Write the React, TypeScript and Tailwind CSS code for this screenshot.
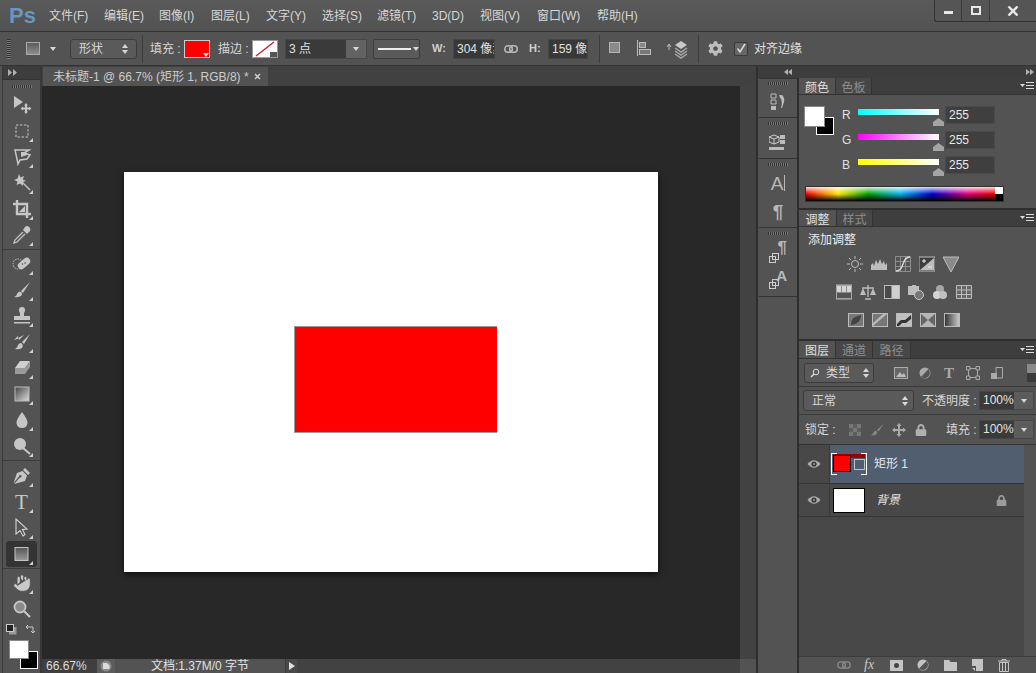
import { Hand } from 'lucide-react';
import { FaCog, FaLock } from 'react-icons/fa';
import type { ReactNode } from 'react';

const Flyout = () => (
  <span className="absolute right-[7px] bottom-[2px] w-0 h-0 border-l-[4px] border-l-transparent border-b-[4px] border-b-[#d0d0d0]" />
);

const Ico = ({ children, size = 20, className = '' }: { children: ReactNode; size?: number; className?: string }) => (
  <svg width={size} height={size} viewBox="0 0 20 20" className={className}>
    {children}
  </svg>
);

const G = '#c6c6c6';

const toolGroups: { icon: ReactNode; fly?: boolean; active?: boolean }[][] = [
  [
    {
      icon: (
        <Ico>
          <path d="M2 1 L2 13 L11 7Z" fill={G} />
          <path d="M14 8 L16 10.500 L15 10.500 L15 12.500 L17 12.500 L17 11.500 L19.500 13.500 L17 15.500 L17 14.500 L15 14.500 L15 16.500 L16 16.500 L14 19 L12 16.500 L13 16.500 L13 14.500 L11 14.500 L11 15.500 L8.500 13.500 L11 11.500 L11 12.500 L13 12.500 L13 10.500 L12 10.500Z" fill={G} />
        </Ico>
      ),
    },
    {
      fly: true,
      icon: (
        <Ico>
          <rect x="4" y="4" width="12" height="12" fill="none" stroke={G} strokeWidth="1" strokeDasharray="2.500 1.500" />
        </Ico>
      ),
    },
    {
      fly: true,
      icon: (
        <Ico>
          <path d="M3 3 L17 3 L12 6 L18 8 L15 12 L8 13 L6 17 L5 12Z" fill="none" stroke={G} strokeWidth="1.500" />
          <path d="M9 5 L14 5 L15 8 L9 10Z" fill={G} />
        </Ico>
      ),
    },
    {
      fly: true,
      icon: (
        <Ico>
          <path d="M7 1 L8.500 4.500 L12 3 L10.800 6.500 L14 8 L10.500 9 L11 13 L8 10.500 L4.500 12 L5.500 8.500 L2 7 L5.500 5.500Z" fill={G} />
          <path d="M10 9 L18 17" stroke={G} strokeWidth="1.500" />
        </Ico>
      ),
    },
    {
      fly: true,
      icon: (
        <Ico>
          <path d="M5 1 V15 H19 M1 5 H15 V19" fill="none" stroke={G} strokeWidth="2.400" />
          <path d="M7 13 L13 7 V13Z" fill={G} />
        </Ico>
      ),
    },
    {
      fly: true,
      icon: (
        <Ico>
          <path d="M13 2 Q15 0 17.500 2.500 Q19.500 5 17 7 L15 9 L11 5Z" fill={G} />
          <path d="M11 7 L3 15 L2 18 L5 17 L13 9" fill="none" stroke={G} strokeWidth="1.300" />
        </Ico>
      ),
    },
  ],
  [
    {
      fly: true,
      icon: (
        <Ico>
          <circle cx="6" cy="10" r="5" fill="none" stroke={G} strokeWidth="1" strokeDasharray="1.500 1" />
          <rect x="5" y="6" width="14" height="7" rx="3.500" transform="rotate(-40 12 9.500)" fill={G} />
          <circle cx="10.500" cy="10" r="0.800" fill="#555" />
          <circle cx="13" cy="9" r="0.800" fill="#555" />
        </Ico>
      ),
    },
    {
      fly: true,
      icon: (
        <Ico>
          <path d="M18 2 L9 11 L11 13Z" fill={G} />
          <path d="M8 11.500 Q11 13 9.500 15.500 Q7 18 2 17 Q5 16 5 14 Q5.500 12 8 11.500Z" fill={G} />
        </Ico>
      ),
    },
    {
      fly: true,
      icon: (
        <Ico>
          <path d="M10 1 Q13 1 13 4 Q13 6 12 7 L12 10 H18 V14 H2 V10 H8 V7 Q7 6 7 4 Q7 1 10 1Z" fill={G} />
          <rect x="2" y="16" width="16" height="1.500" fill={G} />
        </Ico>
      ),
    },
    {
      fly: true,
      icon: (
        <Ico>
          <path d="M18 2 L10 10 L12 12Z" fill={G} />
          <path d="M9 11 Q12 13 10 16 Q7 18 3 17 Q6 15 6 13 Q7 11 9 11Z" fill={G} />
          <path d="M2 8 L6 4 V6 L12 3 L7 8 V6.500Z" fill={G} />
        </Ico>
      ),
    },
    {
      fly: true,
      icon: (
        <Ico>
          <path d="M8 3 H18 L13 10 H3Z" fill="#d0d0d0" />
          <path d="M3 10 H13 V16 H3Z M13 10 L18 3 V9 L13 16Z" fill="#9a9a9a" />
        </Ico>
      ),
    },
    {
      fly: true,
      icon: (
        <Ico>
          <defs>
            <linearGradient id="gr" x1="0" x2="1" y1="0" y2="1">
              <stop offset="0" stopColor="#444" />
              <stop offset="1" stopColor="#ddd" />
            </linearGradient>
          </defs>
          <rect x="3" y="3" width="14" height="14" fill="url(#gr)" stroke="#bbb" />
        </Ico>
      ),
    },
    {
      fly: true,
      icon: (
        <Ico>
          <path d="M10 2 Q16 10 15.500 13 Q15 18 10 18 Q5 18 4.500 13 Q4 10 10 2Z" fill={G} />
        </Ico>
      ),
    },
    {
      fly: true,
      icon: (
        <Ico>
          <circle cx="8" cy="8" r="6" fill={G} />
          <path d="M11 12 L18 18" stroke={G} strokeWidth="2" />
        </Ico>
      ),
    },
  ],
  [
    {
      fly: true,
      icon: (
        <Ico>
          <path d="M13 2 L18 7 L16 9 L11 4Z" fill={G} />
          <path d="M10.500 5 L15 9.500 L13 15 L2 18 L8 11.500 A1.300 1.300 0 1 0 7 10.500 L1.500 17 L5 7Z" fill={G} />
        </Ico>
      ),
    },
    {
      fly: true,
      icon: <span className="font-['Liberation_Serif',serif] text-[21px] leading-none text-[#c6c6c6]">T</span>,
    },
    {
      fly: true,
      icon: (
        <Ico>
          <path d="M4 1 L4 16 L8 12.500 L11 18 L13 16.500 L10.500 11.500 L15 11Z" fill="#555" stroke="#d4d4d4" strokeWidth="1.100" />
        </Ico>
      ),
    },
    {
      fly: true,
      active: true,
      icon: (
        <Ico>
          <defs>
            <linearGradient id="rc" x1="0" x2="0" y1="0" y2="1">
              <stop offset="0" stopColor="#555" />
              <stop offset="1" stopColor="#999" />
            </linearGradient>
          </defs>
          <rect x="3" y="3.500" width="13" height="13" fill="url(#rc)" stroke="#c4c4c4" />
        </Ico>
      ),
    },
  ],
  [
    {
      fly: true,
      icon: <Hand size={20} fill="#cacaca" stroke="#535353" strokeWidth={1.200} />,
    },
    {
      icon: (
        <Ico>
          <circle cx="8" cy="8" r="5.500" fill="#8a8a8a" stroke="#c6c6c6" strokeWidth="1.800" />
          <path d="M12 12 L18 18" stroke={G} strokeWidth="2.200" />
        </Ico>
      ),
    },
  ],
];

const groupGaps = ['', 'border-t border-[#3c3c3c] pt-[1px] mt-[1px]', 'border-t border-[#3c3c3c] pt-[2px] mt-[1px]', 'border-t border-[#3c3c3c] pt-[1px] mt-[1px]'];

const menus: [string, string][] = [
  ['文件(F)', 'w-[55px]'],
  ['编辑(E)', 'w-[55px]'],
  ['图像(I)', 'w-[52px]'],
  ['图层(L)', 'w-[55px]'],
  ['文字(Y)', 'w-[56px]'],
  ['选择(S)', 'w-[55px]'],
  ['滤镜(T)', 'w-[55px]'],
  ['3D(D)', 'w-[48px]'],
  ['视图(V)', 'w-[57px]'],
  ['窗口(W)', 'w-[60px]'],
  ['帮助(H)', 'w-[50px]'],
];

const Grip = ({ className = '' }: { className?: string }) => (
  <div className={`h-[3px] w-[20px] mx-auto bg-[repeating-linear-gradient(to_right,#2f2f2f_0,#2f2f2f_1px,#7a7a7a_1px,#7a7a7a_2px)] ${className}`} />
);

const Caret = ({ className = '' }: { className?: string }) => (
  <span className={`w-0 h-0 border-x-[3px] border-x-transparent border-t-[4px] border-t-[#d8d8d8] ${className}`} />
);

const UpDown = () => (
  <span className="flex flex-col gap-[2px]">
    <span className="w-0 h-0 border-x-[3px] border-x-transparent border-b-[4px] border-b-[#d8d8d8]" />
    <span className="w-0 h-0 border-x-[3px] border-x-transparent border-t-[4px] border-t-[#d8d8d8]" />
  </span>
);

const OptionSep = ({ className = '' }: { className?: string }) => <div className={`w-[1px] h-[28px] bg-[#3c3c3c] ${className}`} />;

const PanelMenu = () => (
  <svg width="14" height="8" viewBox="0 0 14 8" className="mr-[2px]">
    <path d="M0 2 H5 L2.500 5Z" fill="#ddd" />
    <path d="M6 0.500 H14 M6 3.500 H14 M6 6.500 H14" stroke="#ddd" strokeWidth="1" />
  </svg>
);

const PanelTabs = ({ tabs, height }: { tabs: [string, string][]; height: string }) => (
  <div className={`flex items-stretch justify-between bg-[#3e3e3e] border-b border-[#333] ${height}`}>
    <div className="flex">
      {tabs.map(([label, width], i) => (
        <div
          key={label}
          className={`${width} flex items-center justify-center pt-[3px] text-[12px] border-r border-[#333] ${i === 0 ? 'bg-[#535353] text-[#e0e0e0]' : 'bg-[#474747] text-[#8e8e8e]'}`}
        >
          {label}
        </div>
      ))}
    </div>
    <div className="flex items-center">
      <PanelMenu />
    </div>
  </div>
);

const ColorRow = ({ label, slider }: { label: string; slider: string }) => (
  <div className="flex items-center h-[18px] mb-[7px]">
    <span className="w-[16px] text-[12px] text-[#e0e0e0]">{label}</span>
    <div className={`relative w-[81px] h-[6px] -mt-[6px] ${slider}`}>
      <span className="absolute -right-[5px] top-[9px] w-[11px] h-[8px] bg-[#a4a4a4] [clip-path:polygon(50%_0,100%_50%,100%_100%,0_100%,0_50%)]" />
    </div>
    <div className="ml-[6px] w-[50px] h-[18px] bg-[#3f3f3f] border border-[#4a4a4a] text-[12px] text-[#e8e8e8] pl-[3px] leading-[17px]">255</div>
  </div>
);

const AdjBox = ({ children }: { children: ReactNode }) => (
  <svg width="16" height="16" viewBox="0 0 16 16">
    {children}
  </svg>
);

const A = '#bdbdbd';

const adjRows: { ml: string; icons: ReactNode[] }[] = [
  {
    ml: 'ml-[48px]',
    icons: [
      <>
        <circle cx="8" cy="8" r="3.500" fill="none" stroke={A} />
        <path d="M8 0 V3 M8 13 V16 M0 8 H3 M13 8 H16 M2 2 L4 4 M12 12 L14 14 M14 2 L12 4 M4 12 L2 14" stroke={A} />
      </>,
      <path d="M0 14 V9 L2 7 L3 10 L5 4 L7 8 L9 3 L11 8 L13 5 L14 9 L16 7 V14Z" fill={A} />,
      <>
        <path d="M0.500 0.500 H15.500 V15.500 H0.500Z M5.500 0 V16 M10.500 0 V16 M0 5.500 H16 M0 10.500 H16" fill="none" stroke="#8e8e8e" />
        <path d="M1 15 Q6 15 8 8 Q10 1 15 1" fill="none" stroke="#ddd" strokeWidth="1.300" />
      </>,
      <>
        <rect x="0" y="1" width="16" height="14" fill="#3e3e3e" stroke="#bbb" />
        <path d="M1 14 L15 2 V14Z" fill="#bdbdbd" />
        <path d="M3 5 H7 M5 3 V7 M9 11 H13" stroke="#eee" />
      </>,
      <path d="M0 1 H16 L8 16Z" fill="#8a8a8a" stroke="#bdbdbd" />,
    ],
  },
  {
    ml: 'ml-[37px]',
    icons: [
      <>
        <rect x="0" y="1" width="16" height="14" fill="#8a8a8a" stroke="#bbb" />
        <path d="M1 2 H5 V8 H1Z M6 2 H10 V8 H6Z M11 2 H15 V8 H11Z" fill="#d6d6d6" />
        <rect x="1" y="9" width="14" height="5" fill="#555" />
      </>,
      <>
        <path d="M8 1 V13 M2 4 H14 M5 15 H11" stroke={A} strokeWidth="1.300" />
        <path d="M0 11 L3 4 L6 11Z M10 11 L13 4 L16 11Z" fill={A} />
      </>,
      <>
        <rect x="0.500" y="1.500" width="15" height="13" fill="#d0d0d0" stroke="#bbb" />
        <rect x="1" y="2" width="6.500" height="12" fill="#4a4a4a" />
      </>,
      <>
        <rect x="0" y="2" width="11" height="9" fill="#bdbdbd" />
        <rect x="4" y="1" width="4" height="2" fill="#bdbdbd" />
        <circle cx="11" cy="11" r="4.500" fill="#777" stroke="#c8c8c8" />
      </>,
      <>
        <circle cx="8" cy="5" r="4" fill="#a6a6a6" />
        <circle cx="5" cy="11" r="4" fill="#d4d4d4" />
        <circle cx="11" cy="11" r="4" fill="#c0c0c0" />
      </>,
      <path d="M0.500 1.500 H15.500 V14.500 H0.500Z M5.500 1.500 V14.500 M10.500 1.500 V14.500 M0.500 6 H15.500 M0.500 10.500 H15.500" fill="#666" stroke="#bbb" />,
    ],
  },
  {
    ml: 'ml-[49px]',
    icons: [
      <>
        <rect x="0.500" y="1.500" width="15" height="13" fill="#777" stroke="#bbb" />
        <path d="M3 13 Q3 7 7 5 L13 3 Q13 8 9 11 Q6 13 3 13Z" fill="#444" />
      </>,
      <>
        <rect x="0.500" y="1.500" width="15" height="13" fill="#777" stroke="#bbb" />
        <path d="M1 11 L11 2 H15 L1 14Z" fill="#b8b8b8" />
      </>,
      <>
        <rect x="0.500" y="1.500" width="15" height="13" fill="#c0c0c0" stroke="#bbb" />
        <path d="M1 12 L5 8 H9 L15 3 V7 L10 11 H6 L3 14 H1Z" fill="#333" />
      </>,
      <>
        <rect x="0.500" y="1.500" width="15" height="13" fill="#b4b4b4" stroke="#bbb" />
        <path d="M1 2 L8 8 L1 14Z M15 2 L8 8 L15 14Z" fill="#666" />
      </>,
      <>
        <defs>
          <linearGradient id="gm" x1="0" x2="1" y1="0" y2="0">
            <stop offset="0" stopColor="#333" />
            <stop offset="1" stopColor="#ccc" />
          </linearGradient>
        </defs>
        <rect x="0.500" y="1.500" width="15" height="13" fill="url(#gm)" stroke="#bbb" />
      </>,
    ],
  },
];

const Eye = () => (
  <svg width="14" height="10" viewBox="0 0 14 10">
    <path d="M0.500 5 Q7 -2.500 13.500 5 Q7 12.500 0.500 5Z" fill="#aaa" />
    <circle cx="7" cy="5" r="2.600" fill="#3a3a3a" />
    <circle cx="7" cy="5" r="1" fill="#999" />
  </svg>
);

const SmallIcon = ({ children, w = 14 }: { children: ReactNode; w?: number }) => (
  <svg width={w} height="14" viewBox="0 0 14 14">
    {children}
  </svg>
);

const DarkInput = ({ value }: { value: string }) => (
  <div className="flex h-[19px] w-[55px] bg-[#3a3a3a] border border-[#464646]">
    <span className="flex-1 text-[12px] leading-[17px] pl-[3px] text-[#e4e4e4]">{value}</span>
    <span className="w-[19px] bg-[#5c5c5c] flex items-center justify-center">
      <Caret />
    </span>
  </div>
);

export default function App() {
  return (
    <div className="w-[1036px] h-[673px] overflow-hidden flex flex-col bg-[#535353] text-[#d6d6d6] text-[12px] whitespace-nowrap font-['Liberation_Sans','Noto_Sans_CJK_SC',sans-serif]">
      {/* menu bar */}
      <div className="relative h-[32px] shrink-0 flex items-center border-b border-[#333] bg-[linear-gradient(to_bottom,#5a5a5a,#525252)]">
        <span className="ml-[9px] w-[40px] text-[22px] leading-none font-bold text-[#6b95bf]">Ps</span>
        {menus.map(([label, w]) => (
          <span key={label} className={`${w} text-[12px]`}>
            {label}
          </span>
        ))}
        <div className="absolute right-0 top-0 h-[22px] w-[102px] flex border-l border-b border-[#333] rounded-bl-[3px] bg-[#555]">
          <div className="w-[27px] border-r border-[#3a3a3a] flex items-center justify-center">
            <span className="w-[9px] h-[3px] mt-[3px] bg-[#e8e8e8]" />
          </div>
          <div className="w-[28px] border-r border-[#3a3a3a] flex items-center justify-center">
            <span className="w-[10px] h-[9px] border-2 border-[#e8e8e8]" />
          </div>
          <div className="flex-1 flex items-center justify-center">
            <svg width="12" height="10" viewBox="0 0 12 10">
              <path d="M1.500 0.500 L10.500 9.500 M10.500 0.500 L1.500 9.500" stroke="#e8e8e8" strokeWidth="2.400" />
            </svg>
          </div>
        </div>
      </div>

      {/* options bar */}
      <div className="h-[34px] shrink-0 flex items-center border-b border-[#333] text-[12px]">
        <div className="ml-[7px] w-[4px] h-[20px] bg-[repeating-linear-gradient(to_bottom,#333_0,#333_1px,#777_1px,#777_2px)]" />
        <span className="ml-[15px] w-[14px] h-[13px] bg-[linear-gradient(to_bottom,#5c5c5c,#8e8e8e)] border border-[#aaa]" />
        <Caret className="ml-[10px]" />
        <div className="ml-[14px] w-[67px] h-[20px] flex items-center justify-between px-[8px] rounded-[3px] bg-[#5a5a5a] border border-[#3c3c3c]">
          <span>形状</span>
          <UpDown />
        </div>
        <OptionSep className="ml-[5px]" />
        <span className="ml-[7px] w-[34px]">填充 :</span>
        <div className="relative w-[26px] h-[18px] bg-[#ff0000] border border-[#ccc]">
          <Caret className="absolute right-0 bottom-0" />
        </div>
        <span className="ml-[8px] w-[34px]">描边 :</span>
        <div className="relative w-[26px] h-[18px] bg-white border border-[#999] overflow-hidden">
          <svg width="24" height="16" viewBox="0 0 24 16" className="block">
            <path d="M3 15 L21 1" stroke="#c8252b" strokeWidth="1.500" />
          </svg>
          <span className="absolute right-0 bottom-0 w-[7px] h-[5px] bg-[#555]" />
        </div>
        <div className="ml-[7px] flex w-[82px] h-[20px] bg-[#3a3a3a] border border-[#464646]">
          <span className="flex-1 pl-[3px] text-[12px] leading-[18px] text-[#e0e0e0]">3 点</span>
          <span className="w-[20px] bg-[#636363] flex items-center justify-center">
            <Caret />
          </span>
        </div>
        <div className="ml-[6px] w-[47px] h-[20px] flex items-center gap-[2px] pl-[4px] rounded-[2px] bg-[#5a5a5a] border border-[#3c3c3c]">
          <span className="w-[33px] h-[2px] bg-[#ececec]" />
          <Caret />
        </div>
        <span className="ml-[12px] w-[21px] font-bold text-[11px] text-[#cfcfcf]">W:</span>
        <div className="w-[42px] h-[20px] overflow-hidden bg-[#383838] border border-[#464646] pl-[3px] text-[12px] leading-[18px] text-[#e0e0e0]">304 像素</div>
        <svg width="14" height="10" viewBox="0 0 14 10" className="ml-[9px]">
          <rect x="0.800" y="1.800" width="7.500" height="6.400" rx="3" fill="none" stroke="#b8b8b8" strokeWidth="1.500" />
          <rect x="5.700" y="1.800" width="7.500" height="6.400" rx="3" fill="none" stroke="#b8b8b8" strokeWidth="1.500" />
        </svg>
        <span className="ml-[11px] w-[19px] font-bold text-[11px] text-[#cfcfcf]">H:</span>
        <div className="w-[40px] h-[20px] overflow-hidden bg-[#383838] border border-[#464646] pl-[3px] text-[12px] leading-[18px] text-[#e0e0e0]">159 像素</div>
        <OptionSep className="ml-[11px]" />
        <span className="ml-[9px] w-[11px] h-[11px] -mt-[3px] bg-[#8a8a8a] border border-[#b4b4b4]" />
        <svg width="16" height="18" viewBox="0 0 16 18" className="ml-[17px]">
          <path d="M0.500 0 V16" stroke="#bbb" />
          <rect x="2.500" y="2.500" width="6" height="5" fill="#888" stroke="#bbb" />
          <rect x="2.500" y="9.500" width="11" height="5" fill="#777" stroke="#bbb" />
        </svg>
        <svg width="22" height="20" viewBox="0 0 22 20" className="ml-[14px]">
          <path d="M0 8 L2 5 L4 8 M2 6 V11" fill="none" stroke="#bbb" />
          <path d="M8 6 L14 2 L20 6 L14 10Z" fill="#c8c8c8" />
          <path d="M8 9 L14 13 L20 9 M8 12 L14 16 L20 12 M8 15 L14 19 L20 15" fill="none" stroke="#a8a8a8" strokeWidth="1.500" />
        </svg>
        <OptionSep className="ml-[9px]" />
        <FaCog size={15} color="#bdbdbd" className="ml-[9px]" />
        <div className="ml-[11px] w-[14px] h-[14px] rounded-[2px] bg-[#666] border border-[#3a3a3a] flex items-center justify-center">
          <svg width="12" height="12" viewBox="0 0 12 12">
            <path d="M2.500 5.500 L5 9 L10 1" fill="none" stroke="#ddd" strokeWidth="1.500" />
          </svg>
        </div>
        <span className="ml-[6px] text-[12px] text-[#e0e0e0]">对齐边缘</span>
      </div>

      <div className="flex-1 min-h-0 flex">
        {/* tools */}
        <div className="w-[42px] shrink-0 pl-[2px] flex">
          <div className="flex-1 flex flex-col border-l border-r-2 border-[#383838] bg-[#535353]">
            <div className="h-[14px] shrink-0 bg-[#3d3d3d] border-b border-[#333] flex items-center pl-[5px]">
              <svg width="9" height="7" viewBox="0 0 9 7">
                <path d="M0 0 L4 3.500 L0 7Z M5 0 L9 3.500 L5 7Z" fill="#b0b0b0" />
              </svg>
            </div>
            <div className="h-[12px] shrink-0 flex items-center">
              <Grip />
            </div>
            {toolGroups.map((group, gi) => (
              <div key={gi} className={groupGaps[gi]}>
                {group.map((t, i) => (
                  <div key={i} className="relative h-[26px] flex items-center justify-center">
                    {t.active && <span className="absolute left-[3px] right-[3px] top-0 bottom-0 rounded-[3px] bg-[#343434]" />}
                    <span className="relative flex items-center justify-center">{t.icon}</span>
                    {t.fly && <Flyout />}
                  </div>
                ))}
              </div>
            ))}
            <div className="h-[18px] shrink-0 flex items-start pt-[2px] pl-[3px] gap-[8px]">
              <svg width="11" height="11" viewBox="0 0 11 11">
                <rect x="3" y="3" width="7.500" height="7.500" fill="#999" />
                <rect x="0.500" y="0.500" width="7" height="7" fill="#222" stroke="#ccc" />
              </svg>
              <svg width="11" height="11" viewBox="0 0 11 11">
                <path d="M1 3 H8 V9 M1 3 L3 1 M1 3 L3 5 M8 9 L6 7 M8 9 L10 7" fill="none" stroke="#c8c8c8" />
              </svg>
            </div>
            <div className="relative h-[29px] ml-[3px]">
              <span className="absolute left-[14px] top-[11px] w-[18px] h-[18px] bg-black border border-white" />
              <span className="absolute left-[3px] top-0 w-[20px] h-[19px] bg-white border border-[#888]" />
            </div>
          </div>
        </div>

        {/* document */}
        <div className="w-[714px] shrink-0 flex flex-col">
          <div className="h-[20px] shrink-0 bg-[#414141] pt-[1px] pl-[1px]">
            <div className="w-[225px] h-[19px] bg-[#535353] flex items-center pl-[10px] text-[12px] text-[#cccccc]">
              <span className="w-[201px]">未标题-1 @ 66.7% (矩形 1, RGB/8) *</span>
              <svg width="7" height="7" viewBox="0 0 7 7">
                <path d="M1 1 L6 6 M6 1 L1 6" stroke="#ccc" strokeWidth="1.500" />
              </svg>
            </div>
          </div>
          <div className="flex-1 min-h-0 flex">
            <div className="w-[698px] bg-[#282828] flex items-center justify-center">
              <div className="w-[534px] h-[400px] mb-[1px] bg-white shadow-[0_2px_6px_rgba(0,0,0,0.7)] pt-[154px] pl-[170px]">
                <div className="w-[203px] h-[107px] bg-[#ff0000] border-l border-t border-b border-[#999]" />
              </div>
            </div>
            <div className="w-[16px] bg-[#424242]" />
          </div>
          <div className="h-[14px] shrink-0 flex bg-[#424242] text-[12px] leading-[14px]">
            <span className="w-[55px] pl-[4px] text-[#dcdcdc] bg-[#3f3f3f]">66.67%</span>
            <span className="w-[18px] flex items-center justify-center bg-[#5c5c5c]">
              <svg width="12" height="12" viewBox="0 0 12 12">
                <circle cx="6" cy="6" r="5.500" fill="#8a8a8a" />
                <path d="M3 3 H7 L9.500 5.500 V9 H3Z" fill="#dcdcdc" />
              </svg>
            </span>
            <span className="w-[171px] bg-[#535353] text-center text-[#e0e0e0] border-r border-[#3a3a3a]">文档:1.37M/0 字节</span>
            <span className="w-[11px] bg-[#4a4a4a] flex items-center justify-center">
              <span className="w-0 h-0 border-y-[4px] border-y-transparent border-l-[6px] border-l-[#e0e0e0]" />
            </span>
            <span className="flex-1" />
            <span className="w-[16px] bg-[#535353]" />
          </div>
        </div>

        {/* right docks */}
        <div className="flex-1 min-w-0 flex flex-col border-l-2 border-[#2e2e2e]">
          <div className="h-[12px] shrink-0 bg-[#3d3d3d] flex items-center justify-between pl-[26px] pr-[2px]">
            <svg width="8" height="6" viewBox="0 0 8 6">
              <path d="M4 0 L0 3 L4 6Z M8 0 L4 3 L8 6Z" fill="#b0b0b0" />
            </svg>
            <svg width="8" height="6" viewBox="0 0 8 6">
              <path d="M0 0 L4 3 L0 6Z M4 0 L8 3 L4 6Z" fill="#b0b0b0" />
            </svg>
          </div>
          <div className="flex-1 min-h-0 flex">
            {/* collapsed icon dock */}
            <div className="w-[41px] shrink-0 pl-[1px] border-r-2 border-[#2e2e2e] flex flex-col text-[#bdbdbd]">
              <div className="h-[40px] border-b border-[#333] border-t border-t-[#333] pt-[3px] flex flex-col items-center">
                <Grip />
                <svg width="16" height="18" viewBox="0 0 16 18" className="mt-[8px]">
                  <path d="M1 1 H6 V5 H1Z M1 7 H6 V11 H1Z" fill="none" stroke="#bbb" />
                  <rect x="1" y="13" width="5" height="4" fill="#bbb" />
                  <path d="M9 2 H12 Q15 5 14 9 L12 15 H11 Q13 8 10 4.500Z" fill="#bbb" />
                </svg>
              </div>
              <div className="h-[41px] border-b border-[#333] pt-[4px] flex flex-col items-center">
                <Grip />
                <svg width="18" height="19" viewBox="0 0 18 19" className="mt-[9px]">
                  <path d="M5 1 L10 3 V8 L5 10 L0 8 V3Z" fill="none" stroke="#ccc" />
                  <path d="M0 3 L5 5 L10 3 M5 5 V10" stroke="#ccc" fill="none" />
                  <rect x="11" y="1" width="5" height="4" fill="#bbb" />
                  <rect x="11" y="6" width="5" height="4" fill="#bbb" />
                  <rect x="0" y="13" width="15" height="3" fill="#bbb" />
                </svg>
              </div>
              <div className="h-[69px] border-b border-[#333] pt-[4px] flex flex-col items-center">
                <Grip />
                <span className="mt-[5px] h-[24px] flex items-center text-[19px] leading-none text-[#b8b8b8]">
                  A<span className="w-[1px] h-[16px] ml-[1px] bg-[#b8b8b8]" />
                </span>
                <span className="mt-[7px] text-[19px] leading-none text-[#b8b8b8] font-bold">¶</span>
              </div>
              <div className="h-[69px] border-b border-[#333] pt-[4px] flex flex-col items-center">
                <Grip />
                <div className="relative w-[18px] h-[22px] mt-[6px]">
                  <span className="absolute right-0 -top-[2px] text-[17px] leading-none font-bold text-[#b8b8b8]">¶</span>
                  <span className="absolute left-0 bottom-0 w-[7px] h-[7px] border border-[#ccc]" />
                  <span className="absolute left-[3px] bottom-[3px] w-[7px] h-[7px] border border-[#ccc]" />
                </div>
                <div className="relative w-[18px] h-[20px] mt-[6px]">
                  <span className="absolute right-0 -top-[1px] text-[15px] leading-none font-bold text-[#b8b8b8]">A</span>
                  <span className="absolute left-0 bottom-0 w-[7px] h-[7px] border border-[#ccc]" />
                  <span className="absolute left-[3px] bottom-[3px] w-[7px] h-[7px] border border-[#ccc]" />
                </div>
              </div>
            </div>

            {/* panels */}
            <div className="flex-1 min-w-0 flex flex-col">
              {/* colour */}
              <div className="h-[130px] shrink-0">
                <PanelTabs height="h-[17px]" tabs={[['颜色', 'w-[37px]'], ['色板', 'w-[36px]']]} />
                <div className="flex pt-[11px]">
                  <div className="relative w-[43px] h-[40px] shrink-0">
                    <span className="absolute left-[17px] top-[11px] w-[18px] h-[18px] bg-black border border-white" />
                    <span className="absolute left-[5px] top-0 w-[21px] h-[21px] bg-white border border-[#888]" />
                  </div>
                  <div>
                    <ColorRow label="R" slider="bg-[linear-gradient(to_right,#00ffff,#ffffff)]" />
                    <ColorRow label="G" slider="bg-[linear-gradient(to_right,#ff00ff,#ffffff)]" />
                    <ColorRow label="B" slider="bg-[linear-gradient(to_right,#ffff00,#ffffff)]" />
                  </div>
                </div>
                <div className="flex w-[199px] h-[16px] ml-[6px] mt-[5px] border border-[#333]">
                  <div className="flex-1 bg-[linear-gradient(to_bottom,rgba(255,255,255,0.85),transparent_50%,#000),linear-gradient(to_right,#e60000,#ffe600_17%,#00a000_33%,#00b4f0_50%,#0000c8_67%,#e00080_85%,#e60000)]" />
                  <div className="w-[8px] flex flex-col">
                    <span className="flex-1 bg-white" />
                    <span className="flex-1 bg-black" />
                  </div>
                </div>
              </div>

              {/* adjustments */}
              <div className="h-[131px] shrink-0 border-t-2 border-[#2e2e2e]">
                <PanelTabs height="h-[17px]" tabs={[['调整', 'w-[38px]'], ['样式', 'w-[36px]']]} />
                <div className="ml-[9px] mt-[5px] h-[16px] leading-[16px] text-[12px] text-[#ececec]">添加调整</div>
                <div className="mt-[8px] flex flex-col gap-[12px]">
                  {adjRows.map((row, ri) => (
                    <div key={ri} className={`flex gap-[8px] ${row.ml}`}>
                      {row.icons.map((ic, i) => (
                        <AdjBox key={i}>{ic}</AdjBox>
                      ))}
                    </div>
                  ))}
                </div>
              </div>

              {/* layers */}
              <div className="flex-1 min-h-0 flex flex-col border-t-2 border-[#2e2e2e]">
                <PanelTabs height="h-[18px]" tabs={[['图层', 'w-[37px]'], ['通道', 'w-[37px]'], ['路径', 'w-[38px]']]} />
                <div className="h-[28px] shrink-0 flex items-center border-b border-[#3a3a3a]">
                  <div className="ml-[5px] w-[70px] h-[20px] flex items-center rounded-[3px] bg-[#5a5a5a] border border-[#3c3c3c] pl-[5px]">
                    <svg width="10" height="10" viewBox="0 0 10 10">
                      <circle cx="6" cy="4" r="2.800" fill="none" stroke="#ddd" />
                      <path d="M4 6 L1 9" stroke="#ddd" strokeWidth="1.400" />
                    </svg>
                    <span className="ml-[6px] flex-1">类型</span>
                    <span className="mr-[4px]">
                      <UpDown />
                    </span>
                  </div>
                  <div className="ml-[20px] flex gap-[10px] items-center">
                    <SmallIcon>
                      <rect x="0.500" y="1.500" width="13" height="11" fill="#666" stroke="#aaa" />
                      <path d="M2 11 L6 6 L8 9 L10 7 L12 11Z" fill="#bbb" />
                    </SmallIcon>
                    <SmallIcon>
                      <circle cx="7" cy="7" r="5.500" fill="#aaa" />
                      <path d="M10.500 3 A5.500 5.500 0 0 1 3 11Z" fill="#555" />
                    </SmallIcon>
                    <span className="w-[14px] text-center font-['Liberation_Serif',serif] font-bold text-[15px] leading-[14px] text-[#aaa]">T</span>
                    <SmallIcon>
                      <rect x="2.500" y="2.500" width="9" height="9" fill="none" stroke="#aaa" />
                      <path d="M0.500 0.500 H4 V4 H0.500Z M10 0.500 H13.500 V4 H10Z M0.500 10 H4 V13.500 H0.500Z M10 10 H13.500 V13.500 H10Z" fill="#555" stroke="#aaa" />
                    </SmallIcon>
                    <SmallIcon>
                      <path d="M6 1.500 H12.500 V12 H6Z" fill="none" stroke="#aaa" />
                      <rect x="1" y="7" width="6" height="6" fill="#aaa" />
                    </SmallIcon>
                  </div>
                  <div className="ml-auto w-[9px] h-[18px] flex flex-col">
                    <span className="flex-1 bg-[#8a8a8a]" />
                    <span className="flex-1 bg-[#3a3a3a]" />
                  </div>
                </div>
                <div className="h-[28px] shrink-0 flex items-center border-b border-[#3a3a3a]">
                  <div className="ml-[4px] w-[111px] h-[21px] flex items-center justify-between rounded-[3px] bg-[#5a5a5a] border border-[#3c3c3c] pl-[8px] pr-[5px]">
                    <span>正常</span>
                    <UpDown />
                  </div>
                  <span className="ml-[8px] w-[57px]">不透明度 :</span>
                  <DarkInput value="100%" />
                </div>
                <div className="h-[30px] shrink-0 flex items-center border-b border-[#333]">
                  <span className="ml-[6px] w-[36px]">锁定 :</span>
                  <div className="flex items-center gap-[8px] ml-[7px]">
                    <SmallIcon>
                      <path d="M1 1 H5 V5 H1Z M9 1 H13 V5 H9Z M5 5 H9 V9 H5Z M1 9 H5 V13 H1Z M9 9 H13 V13 H9Z" fill="#777" />
                      <path d="M5 1 H9 V5 H5Z M1 5 H5 V9 H1Z M9 5 H13 V9 H9Z M5 9 H9 V13 H5Z" fill="#5f5f5f" />
                    </SmallIcon>
                    <SmallIcon>
                      <path d="M13.500 1 L7 7 L8.500 8.500Z" fill="#888" />
                      <path d="M6 7.500 Q8 9 6.500 11 Q4 13 0.500 12.500 Q3 11.500 3 10 Q4 8 6 7.500Z" fill="#888" />
                    </SmallIcon>
                    <SmallIcon>
                      <path d="M7 0 L9.500 3 H8 V6 H11 V4.500 L14 7 L11 9.500 V8 H8 V11 H9.500 L7 14 L4.500 11 H6 V8 H3 V9.500 L0 7 L3 4.500 V6 H6 V3 H4.500Z" fill="#aaa" />
                    </SmallIcon>
                    <FaLock size={12} color="#b0b0b0" className="ml-[1px]" />
                  </div>
                  <span className="ml-auto w-[33px]">填充 :</span>
                  <div className="mr-[2px]">
                    <DarkInput value="100%" />
                  </div>
                </div>
                {/* layer list */}
                <div className="flex-1 min-h-0 flex">
                  <div className="w-[225px] bg-[#484848] flex flex-col">
                    <div className="h-[39px] shrink-0 flex border-b border-[#353535]">
                      <div className="w-[31px] flex items-center justify-center border-r border-[#3a3a3a]">
                        <Eye />
                      </div>
                      <div className="flex-1 bg-[#505e70] flex items-center text-[#e4e8ee]">
                        <div className="relative ml-[1px] w-[36px] h-[22px]">
                          <span className="absolute left-0 top-0 w-[6px] h-[22px] border-l border-t border-b border-white" />
                          <span className="absolute right-0 top-0 w-[6px] h-[22px] border-r border-t border-b border-white" />
                          <span className="absolute left-[2px] top-[1px] w-[32px] h-[4px] bg-[#9b0000]" />
                          <span className="absolute left-[2px] top-[2px] w-[18px] h-[17px] bg-[#ff0000] border border-black" />
                          <span className="absolute right-[2px] top-[6px] w-[11px] h-[11px] border border-[#b8c0cc]" />
                        </div>
                        <span className="ml-[7px]">矩形 1</span>
                      </div>
                    </div>
                    <div className="h-[33px] shrink-0 flex border-b border-[#353535]">
                      <div className="w-[31px] flex items-center justify-center border-r border-[#3a3a3a]">
                        <Eye />
                      </div>
                      <div className="flex-1 flex items-center">
                        <span className="ml-[3px] w-[32px] h-[25px] bg-white border border-black" />
                        <span className="ml-[11px] italic text-[#e0e0e0]">背景</span>
                        <FaLock size={11} color="#9c9c9c" className="ml-auto mr-[17px]" />
                      </div>
                    </div>
                  </div>
                  <div className="flex-1 bg-[#535353]" />
                </div>
                {/* footer */}
                <div className="h-[17px] shrink-0 flex items-center border-t border-[#3c3c3c] pl-[38px] bg-[#535353]">
                  <svg width="14" height="10" viewBox="0 0 14 10">
                    <rect x="0.800" y="1.800" width="7.500" height="6.400" rx="3" fill="none" stroke="#8c8c8c" strokeWidth="1.300" />
                    <rect x="5.700" y="1.800" width="7.500" height="6.400" rx="3" fill="none" stroke="#8c8c8c" strokeWidth="1.300" />
                  </svg>
                  <span className="ml-[13px] w-[14px] italic font-['Liberation_Serif',serif] text-[14px] leading-[14px] text-[#c8c8c8]">fx</span>
                  <span className="ml-[12px] w-[13px] h-[11px] bg-[#c4c4c4] flex items-center justify-center">
                    <span className="w-[5px] h-[5px] rounded-full bg-[#444]" />
                  </span>
                  <svg width="12" height="12" viewBox="0 0 12 12" className="ml-[14px]">
                    <circle cx="6" cy="6" r="5.500" fill="#c4c4c4" />
                    <path d="M9.500 2 A5 5 0 0 1 2 9.500Z" fill="#555" />
                  </svg>
                  <svg width="13" height="11" viewBox="0 0 13 11" className="ml-[15px]">
                    <path d="M0 0 H5 L6.500 2 H13 V11 H0Z" fill="#c4c4c4" />
                  </svg>
                  <svg width="11" height="12" viewBox="0 0 11 12" className="ml-[15px]">
                    <path d="M0 0 H11 V12 H4 V7 H0Z" fill="#c4c4c4" />
                    <path d="M0 9 L3 9 L3 12Z" fill="#c4c4c4" />
                  </svg>
                  <svg width="12" height="13" viewBox="0 0 12 13" className="ml-[15px]">
                    <path d="M0 2 H12 M4 2 V0.500 H8 V2" fill="none" stroke="#c4c4c4" />
                    <path d="M1.500 3.500 H10.500 V12.500 H1.500Z M4.500 4 V12 M7.500 4 V12" fill="none" stroke="#c4c4c4" />
                  </svg>
                </div>
              </div>
            </div>
          </div>
        </div>
      </div>
    </div>
  );
}
